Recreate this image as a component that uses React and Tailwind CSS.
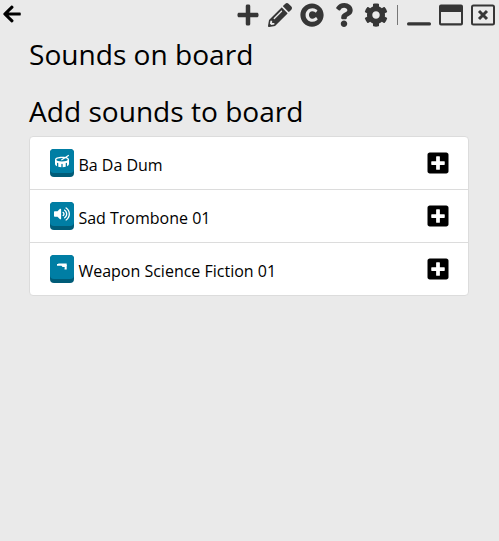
import React from "react";
import { FaArrowLeft, FaPlus, FaCopyright, FaQuestion, FaCog, FaPencilAlt, FaDrum, FaVolumeUp, FaPlusSquare } from "react-icons/fa";

function GunIcon() {
  return (
    <svg viewBox="0 0 16 16" className="h-4 w-4" fill="currentColor">
      <path d="M3 5h1l.5-.5h8.200v1.200l.3.800-.3.800v3.200h-2.200l.2-2.500H8.500L7.500 6.800H3z" />
    </svg>
  );
}

function MinimizeIcon() {
  return (
    <svg viewBox="0 0 24 24" className="h-6 w-6 shrink-0" fill="currentColor">
      <rect x="0" y="19.300" width="24" height="3.200" rx="1.500" />
    </svg>
  );
}

function MaximizeIcon() {
  return (
    <svg viewBox="0 0 24 24" className="h-6 w-6 shrink-0" fill="currentColor">
      <path fillRule="evenodd" d="M2 1.500h20A2 2 0 0 1 24 3.500v17a2 2 0 0 1-2 2H2A2 2 0 0 1 0 20.500V3.500A2 2 0 0 1 2 1.500zM2 9v11.200h20V9z" />
    </svg>
  );
}

function CloseWindowIcon() {
  return (
    <svg viewBox="0 0 24 24" className="h-6 w-6 shrink-0" fill="none" stroke="currentColor">
      <rect x="1" y="2.500" width="22" height="19" rx="1.500" strokeWidth="2" />
      <path d="M8 8l8 8M16 8l-8 8" strokeWidth="3" />
    </svg>
  );
}

const sounds = [
  { name: "Ba Da Dum", icon: <FaDrum className="h-[14px] w-[14px]" /> },
  { name: "Sad Trombone 01", icon: <FaVolumeUp className="h-4 w-4" /> },
  { name: "Weapon Science Fiction 01", icon: <GunIcon /> },
];

export default function App() {
  return (
    <main className="h-[541px] w-[499px] overflow-hidden bg-[#eaeaea] font-['Open_Sans',sans-serif] text-black">
      <header className="flex h-[30px] items-center justify-between pl-[2px] pr-1 text-[#363636]">
        <FaArrowLeft className="mb-[3px] h-5 w-5 text-black" />
        <div className="flex h-[30px] items-center gap-2">
          <FaPlus className="h-6 w-6" />
          <FaPencilAlt className="h-6 w-6" />
          <FaCopyright className="h-6 w-6" />
          <FaQuestion className="h-6 w-6" />
          <FaCog className="h-6 w-6" />
          <span className="mx-px h-5 w-px bg-[#777]" />
          <MinimizeIcon />
          <MaximizeIcon />
          <CloseWindowIcon />
        </div>
      </header>
      <div className="px-[29px]">
        <h1 className="mt-[7px] text-[28.080px] leading-[34px]">Sounds on board</h1>
        <h1 className="mt-[23px] text-[28.080px] leading-[34px]">Add sounds to board</h1>
        <ul className="mt-2 w-[440px] overflow-hidden rounded border border-[#dcdcdc] bg-white">
          {sounds.map((s) => (
            <li key={s.name} className="flex h-[53px] items-center border-b border-[#dcdcdc] pl-5 pr-[18.500px] last:h-[52px] last:border-b-0">
              <span className="h-7 w-6 rounded bg-[#005c78]">
                <span className="flex h-6 items-center justify-center rounded bg-[#007ea4] text-white">{s.icon}</span>
              </span>
              <span className="ml-[4.400px] mt-1 flex-1 text-base">{s.name}</span>
              <FaPlusSquare className="h-6 w-6" />
            </li>
          ))}
        </ul>
      </div>
    </main>
  );
}
